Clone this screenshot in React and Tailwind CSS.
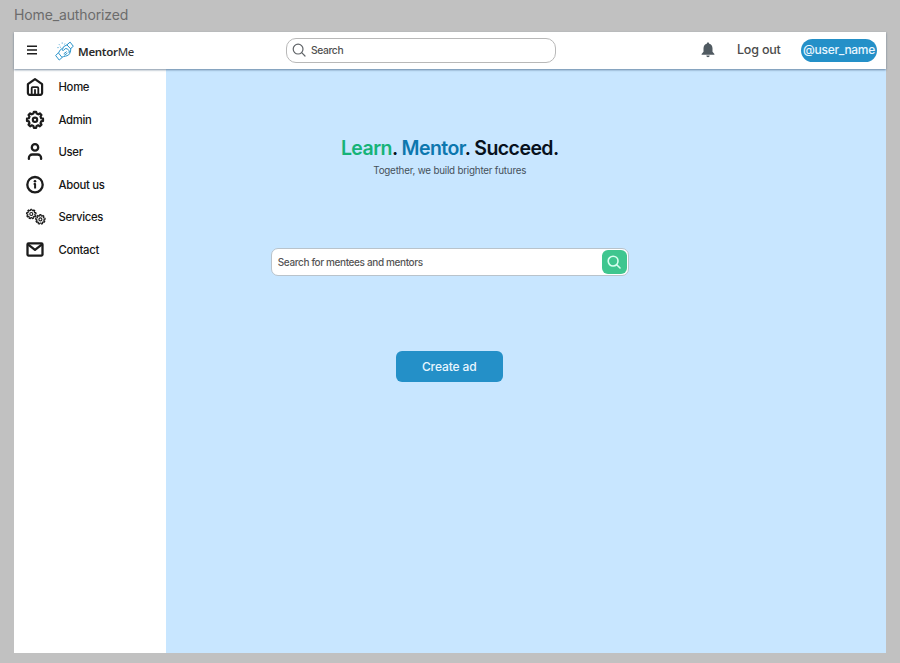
import React from "react";

function gearPath(cx, cy, inner, outer, teeth) {
  const step = (Math.PI * 2) / teeth;
  const at = (r, a) =>
    `${(cx + r * Math.sin(a)).toFixed(2)} ${(cy - r * Math.cos(a)).toFixed(2)}`;
  let d = "";
  for (let i = 0; i < teeth; i++) {
    const a = i * step;
    d += `${i === 0 ? "M" : "L"}${at(inner, a - step * 0.32)}`;
    d += `L${at(outer, a - step * 0.18)}L${at(outer, a + step * 0.18)}L${at(inner, a + step * 0.32)}`;
  }
  return d + "Z";
}

const stroke = {
  fill: "none",
  stroke: "currentColor",
  strokeLinecap: "round",
  strokeLinejoin: "round",
};

const HomeIcon = () => (
  <svg width="20" height="20" viewBox="0 0 20 20" {...stroke} strokeWidth="2.2">
    <path d="M2.9 7.2 10 2.1l7.1 5.1V16a1.8 1.8 0 0 1-1.8 1.8H4.7A1.8 1.8 0 0 1 2.9 16Z" />
    <path d="M6.7 17.4v-6.2a1 1 0 0 1 1-1h4.6a1 1 0 0 1 1 1v6.2M10 13v4.4" strokeWidth="1.8" />
  </svg>
);

const AdminIcon = () => (
  <svg width="20" height="20" viewBox="0 0 20 20" {...stroke} strokeWidth="2.2">
    <path d={gearPath(10, 9.8, 6.4, 8.1, 8)} />
    <circle cx="10" cy="9.8" r="2.2" strokeWidth="2.1" />
  </svg>
);

const UserIcon = () => (
  <svg width="20" height="20" viewBox="0 0 20 20" {...stroke} strokeWidth="2.3">
    <circle cx="10" cy="5.4" r="3.2" />
    <path d="M3.9 16.9v-1a3.4 3.4 0 0 1 3.4-3.4h5.4a3.4 3.4 0 0 1 3.4 3.4v1" />
  </svg>
);

const InfoIcon = () => (
  <svg width="20" height="20" viewBox="0 0 20 20" {...stroke} strokeWidth="2.3">
    <circle cx="10" cy="9.7" r="7.7" />
    <path d="M8.7 9h1.4v4.6" strokeWidth="2" strokeLinecap="butt" />
    <circle cx="10" cy="6.3" r="1.3" fill="currentColor" stroke="none" />
  </svg>
);

const ServicesIcon = () => (
  <svg width="22" height="20" viewBox="0 0 22 20" {...stroke} strokeWidth="1.15">
    <path d={gearPath(6.3, 7, 3.6, 4.8, 9)} />
    <circle cx="6.3" cy="7" r="1.5" />
    <path d={gearPath(15.4, 12.4, 3.6, 4.8, 9)} fill="white" />
    <circle cx="15.4" cy="12.4" r="1.5" />
  </svg>
);

const MailIcon = () => (
  <svg width="20" height="20" viewBox="0 0 20 20" {...stroke} strokeWidth="2.3">
    <rect x="2.5" y="3.4" width="15" height="12.2" rx="1" />
    <path d="m3.6 4.9 6.4 4.9 6.4-4.9" />
  </svg>
);

const navItems = [
  { label: "Home", Icon: HomeIcon },
  { label: "Admin", Icon: AdminIcon },
  { label: "User", Icon: UserIcon },
  { label: "About us", Icon: InfoIcon },
  { label: "Services", Icon: ServicesIcon },
  { label: "Contact", Icon: MailIcon },
];

const Logo = () => (
  <svg
    width="20"
    height="20"
    viewBox="0 0 20 20"
    {...stroke}
    strokeWidth="1"
    className="text-[#2b94cb]"
  >
    <path d="m12.2 3.6 2.9-2.5 3.2 4.2-2.5 2.1Z" />
    <path d="m.9 14.2 2.5-2.3 3.7 4.6-2.6 2.3Z" />
    <path d="m12.2 3.7-3.6 2-1.3 3c-.2.9.9 1.2 1.5.5l1.4-1.6 1.9.2 2.6 2.3c.5 1.1-.4 1.7-1.1 1.1" />
    <path d="M15.8 7.4c.1 2.3-.8 5.4-2.2 6.5-1.9 1.4-4.3 1.2-6.3 2.1M3.7 11.6l1.4-2.5 2-1.6M9 12.6l2.4-1.8M9.5 14.1l2.6-1.8" />
    <path d="M7.2 1.8v.6M4.2 3.5l.3.4M2.7 6.6h.6M5.2 6l.4.3M9.8 2.8l-.2.4" strokeOpacity=".7" />
  </svg>
);

const Magnifier = ({ size, width }) => (
  <svg width={size} height={size} viewBox="0 0 14 14" {...stroke} strokeWidth={width}>
    <circle cx="6.1" cy="6.1" r="4.9" />
    <path d="m9.7 9.7 3.3 3.3" />
  </svg>
);

function Header() {
  return (
    <header className="relative z-10 flex h-[36.5px] shrink-0 items-center bg-white shadow-[0_1px_2px_rgba(40,70,100,0.6)]">
      <div className="flex w-[272px] items-center">
        <svg
          width="10"
          height="10"
          viewBox="0 0 10 10"
          className="ml-[13px] text-[#1d1d1d]"
          fill="none"
          stroke="currentColor"
          strokeWidth="1.5"
        >
          <path d="M0 1.3h10M0 5h10M0 8.7h10" />
        </svg>
        <div className="ml-[18px] flex pt-px">
          <Logo />
        </div>
        <div className="ml-[3px] mt-[3px] font-['Noto_Sans',sans-serif] text-[11.5px] leading-4 tracking-[-0.3px] text-[#2b2b2b]">
          <span className="font-semibold">Mentor</span>
          <span>Me</span>
        </div>
      </div>
      <div className="flex h-[25px] w-[270px] items-center gap-[5px] rounded-[10px] border border-[#b8b8b8] pl-[5px] text-[#606468]">
        <Magnifier size={14} width={1.2} />
        <span className="text-[10.3px] font-medium tracking-[-0.4px] text-[#505050]">Search</span>
      </div>
      <div className="ml-auto flex items-center pr-[9px]">
        <svg width="14" height="16" viewBox="0 0 14 16" fill="#505a61">
          <path d="M7 .5c.8 0 1.2.5 1.2 1.2 2 .5 3.3 2.2 3.3 4.5v3.5L13.4 12v.8H.6V12l1.9-2.3V6.2c0-2.3 1.3-4 3.3-4.5C5.8 1 6.2.5 7 .5ZM5.3 13.6h3.4a1.7 1.7 0 0 1-3.4 0Z" />
        </svg>
        <span className="ml-[22px] w-[44px] whitespace-nowrap text-[12.5px] font-medium tracking-[-0.2px] text-[#4b4b4b]">
          Log out
        </span>
        <span className="ml-[20px] flex h-[23px] w-[76px] items-center justify-center whitespace-nowrap rounded-full bg-[#2490c8] pb-px text-[12px] font-medium tracking-[-0.3px] text-[#e8f6ff]">
          @user_name
        </span>
      </div>
    </header>
  );
}

function Sidebar() {
  return (
    <nav className="w-[151.5px] shrink-0 bg-white pt-[2.5px]">
      {navItems.map(({ label, Icon }) => (
        <a key={label} className="flex h-[32.5px] items-center pl-[11px] text-[#1c1c1c]">
          <span className="flex w-[33.5px]">
            <Icon />
          </span>
          <span className="pt-px text-[11.3px] font-medium tracking-[-0.3px] text-[#161616]">
            {label}
          </span>
        </a>
      ))}
    </nav>
  );
}

export default function App() {
  return (
    <div className="h-[663px] w-[900px] overflow-hidden bg-[#c1c1c1] pl-[14px] font-['Inter','Liberation_Sans',sans-serif]">
      <div className="flex h-[32px] items-center pb-[3px] text-[14px] tracking-[-0.13px] text-[#6c6c6c]">
        Home_authorized
      </div>
      <div className="flex h-[621px] w-[872px] flex-col bg-white">
        <Header />
        <div className="flex flex-1">
          <Sidebar />
          <main className="flex flex-1 flex-col items-center bg-[#c8e6ff] pr-[152px]">
            <h1 className="mt-[66px] whitespace-nowrap text-[19.5px] font-semibold leading-[26px] tracking-[-0.56px] text-[#07111c]">
              <span className="text-[#16b378]">Learn</span>.{" "}
              <span className="text-[#0d77ae]">Mentor</span>. Succeed.
            </h1>
            <p className="mt-[2px] whitespace-nowrap text-[9.8px] leading-4 tracking-[-0.21px] text-[#45505a]">
              Together, we build brighter futures
            </p>
            <div className="mt-[69.5px] flex h-[28px] w-[358px] items-center justify-between rounded-[7px] border border-[#b9c3cb] bg-white pl-[6px] pr-[1px]">
              <span className="whitespace-nowrap text-[10px] font-medium tracking-[-0.37px] text-[#555555]">
                Search for mentees and mentors
              </span>
              <button className="flex h-[24px] w-[25px] items-center justify-center rounded-[6px] bg-[#3fc68f] text-[#d9fff0]">
                <Magnifier size={14} width={1.6} />
              </button>
            </div>
            <button className="mr-px mt-[75px] h-[31px] w-[107px] rounded-[6px] bg-[#2490c8] text-[12px] font-medium tracking-[-0.1px] text-[#e8f6ff]">
              Create ad
            </button>
          </main>
        </div>
      </div>
    </div>
  );
}
